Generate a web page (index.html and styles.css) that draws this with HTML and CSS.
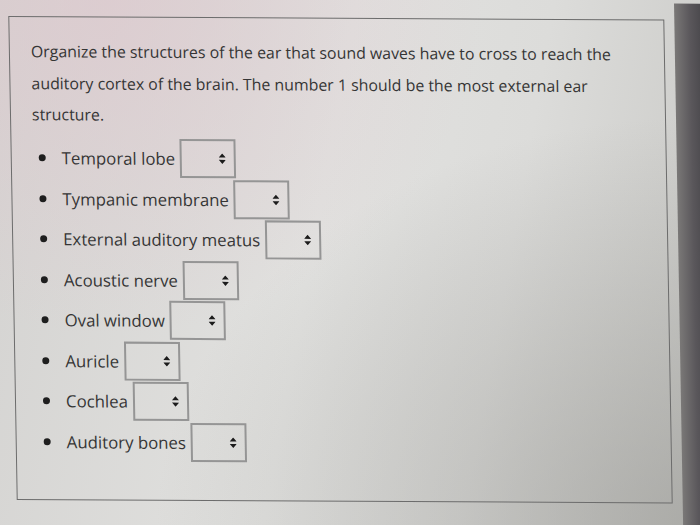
FILE: index.html
```html
<!DOCTYPE html>
<html lang="en">
<head>
    <meta charset="UTF-8">
    <meta name="viewport" content="width=device-width, initial-scale=1.0">
    <title>Ear Structures</title>
    <link rel="stylesheet" href="styles.css">
</head>
<body>
    <div class="screen">
        <div class="desk">
            <div class="panel">
                <p class="question">Organize the structures of the ear that sound waves have to cross to reach the auditory cortex of the brain. The number 1 should be the most external ear structure.</p>
                <ul class="items">
                    <li><span>Temporal lobe</span><span class="pick"><select></select><svg viewBox="0 0 8 12"><path d="M4 0 8 4.6H0ZM0 7.4H8L4 12Z"/></svg></span></li>
                    <li><span>Tympanic membrane</span><span class="pick"><select></select><svg viewBox="0 0 8 12"><path d="M4 0 8 4.6H0ZM0 7.4H8L4 12Z"/></svg></span></li>
                    <li><span>External auditory meatus</span><span class="pick"><select></select><svg viewBox="0 0 8 12"><path d="M4 0 8 4.6H0ZM0 7.4H8L4 12Z"/></svg></span></li>
                    <li><span>Acoustic nerve</span><span class="pick"><select></select><svg viewBox="0 0 8 12"><path d="M4 0 8 4.6H0ZM0 7.4H8L4 12Z"/></svg></span></li>
                    <li><span>Oval window</span><span class="pick"><select></select><svg viewBox="0 0 8 12"><path d="M4 0 8 4.6H0ZM0 7.4H8L4 12Z"/></svg></span></li>
                    <li><span>Auricle</span><span class="pick"><select></select><svg viewBox="0 0 8 12"><path d="M4 0 8 4.6H0ZM0 7.4H8L4 12Z"/></svg></span></li>
                    <li><span>Cochlea</span><span class="pick"><select></select><svg viewBox="0 0 8 12"><path d="M4 0 8 4.6H0ZM0 7.4H8L4 12Z"/></svg></span></li>
                    <li><span>Auditory bones</span><span class="pick"><select></select><svg viewBox="0 0 8 12"><path d="M4 0 8 4.6H0ZM0 7.4H8L4 12Z"/></svg></span></li>
                </ul>
            </div>
        </div>
        <div class="bezel"></div>
    </div>
</body>
</html>
```

FILE: styles.css
```css
html, body {
    margin: 0;
    height: 100%;
    overflow: hidden;
}
body {
    font-family: "Open Sans", "DejaVu Sans", sans-serif;
    color: #353535;
    background:
        radial-gradient(ellipse at 15% 0%, rgba(222, 200, 206, 0.7), rgba(222, 200, 206, 0) 45%),
        radial-gradient(ellipse at 100% 100%, rgba(150, 150, 146, 0.6), rgba(150, 150, 146, 0) 55%),
        linear-gradient(100deg, #d4d3d1 0%, #e1e1df 45%, #dcdcda 70%, #c9c9c6 100%);
}
.screen {
    display: flex;
    height: 100%;
    transform: skew(1deg, 0.3deg);
    transform-origin: 0 0;
}
.desk {
    width: 676px;
    padding: 16px 0 0 8px;
    box-sizing: border-box;
}
.bezel {
    flex: 1;
    margin-left: -2px;
    background: linear-gradient(90deg, #7a7877 0%, #5a575b 60%, #4c4a4e 100%);
}
.panel {
    width: 656px;
    height: 484px;
    border: 1px solid #6c6c6c;
    padding: 19px 0 0 21px;
    box-sizing: border-box;
}
.question {
    margin: 0;
    font-size: 15.9px;
    line-height: 31.5px;
    width: 600px;
}
.items {
    list-style: none;
    margin: 7px 0 0;
    padding: 0 0 0 6px;
    font-size: 16.8px;
}
.items li {
    display: flex;
    align-items: center;
    height: 40.5px;
}
.items li::before {
    content: "";
    width: 7px;
    height: 7px;
    border-radius: 50%;
    background: #1e1e1e;
    margin-right: 16px;
}
.pick {
    position: relative;
    margin-left: 5px;
    height: 39px;
}
.pick select {
    appearance: none;
    width: 56px;
    height: 39px;
    margin: 0;
    border: 2px solid #959595;
    border-radius: 0;
    background: transparent;
}
.pick svg {
    position: absolute;
    right: 10px;
    top: 14px;
    width: 7px;
    height: 11px;
    fill: #1c1c1c;
    pointer-events: none;
}
```
